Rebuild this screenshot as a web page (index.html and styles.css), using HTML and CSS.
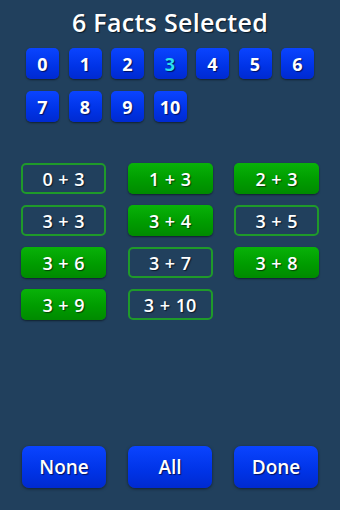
FILE: index.html
```html
<!DOCTYPE html>
<html>
<head>
<meta charset="utf-8">
<link rel="stylesheet" href="styles.css">
</head>
<body>
<div class="screen">
  <h1 class="title">6 Facts Selected</h1>
  <div class="nums">
    <div class="num">0</div>
    <div class="num">1</div>
    <div class="num">2</div>
    <div class="num active">3</div>
    <div class="num">4</div>
    <div class="num">5</div>
    <div class="num">6</div>
    <div class="num">7</div>
    <div class="num">8</div>
    <div class="num">9</div>
    <div class="num">10</div>
  </div>
  <div class="facts">
    <div class="fact">0 + 3</div>
    <div class="fact on">1 + 3</div>
    <div class="fact on">2 + 3</div>
    <div class="fact">3 + 3</div>
    <div class="fact on">3 + 4</div>
    <div class="fact">3 + 5</div>
    <div class="fact on">3 + 6</div>
    <div class="fact">3 + 7</div>
    <div class="fact on">3 + 8</div>
    <div class="fact on">3 + 9</div>
    <div class="fact">3 + 10</div>
  </div>
  <div class="spacer"></div>
  <div class="actions">
    <div class="action">None</div>
    <div class="action">All</div>
    <div class="action">Done</div>
  </div>
</div>
</body>
</html>
```

FILE: styles.css
```css
html, body {
  margin: 0;
  padding: 0;
  background: #21405d;
}
.screen {
  width: 340px;
  height: 510px;
  display: flex;
  flex-direction: column;
  font-family: "Open Sans", "DejaVu Sans", sans-serif;
  color: #fff;
  box-sizing: border-box;
}
.title {
  margin: 7px 0 0 0;
  height: 30px;
  line-height: 30px;
  text-align: center;
  font-size: 25px;
  font-weight: 600;
  letter-spacing: 0.3px;
  text-shadow: 1px 1px 1px #0a1a2a;
}
.nums {
  display: grid;
  grid-template-columns: repeat(7, 33px);
  column-gap: 9.5px;
  row-gap: 12px;
  padding: 11px 0 0 26px;
}
.num {
  height: 31px;
  border-radius: 5px;
  background: linear-gradient(#0a44ff, #0033e6 60%, #002ad0);
  box-shadow: 0 1px 2px rgba(0, 0, 0, 0.5);
  display: flex;
  align-items: center;
  justify-content: center;
  font-size: 18px;
  font-weight: 700;
  text-shadow: 1px 1px 1px #001060;
}
.num.active {
  color: #2ce0f0;
}
.facts {
  display: grid;
  grid-template-columns: repeat(3, 85px);
  column-gap: 21.5px;
  row-gap: 11px;
  padding: 41px 0 0 21px;
}
.fact {
  height: 31px;
  box-sizing: border-box;
  border: 2px solid #1f9a2a;
  border-radius: 5px;
  display: flex;
  align-items: center;
  justify-content: center;
  font-size: 18px;
  font-weight: 600;
  word-spacing: 1px;
  text-shadow: 1px 1px 1px #0a1a2a;
}
.fact.on {
  border: none;
  background: linear-gradient(#08b208, #009c00 55%, #008a00);
  box-shadow: 0 1px 2px rgba(0, 0, 0, 0.5);
  text-shadow: 1px 1px 1px #034003;
}
.spacer {
  flex: 1;
}
.actions {
  display: grid;
  grid-template-columns: repeat(3, 84px);
  column-gap: 22px;
  padding: 0 0 22px 22px;
}
.action {
  height: 42px;
  border-radius: 7px;
  background: linear-gradient(#0a44ff, #0033e6 60%, #002ad0);
  box-shadow: 0 1px 3px rgba(0, 0, 0, 0.5);
  display: flex;
  align-items: center;
  justify-content: center;
  font-size: 19px;
  font-weight: 600;
  text-shadow: 1px 1px 1px #001060;
}
```
